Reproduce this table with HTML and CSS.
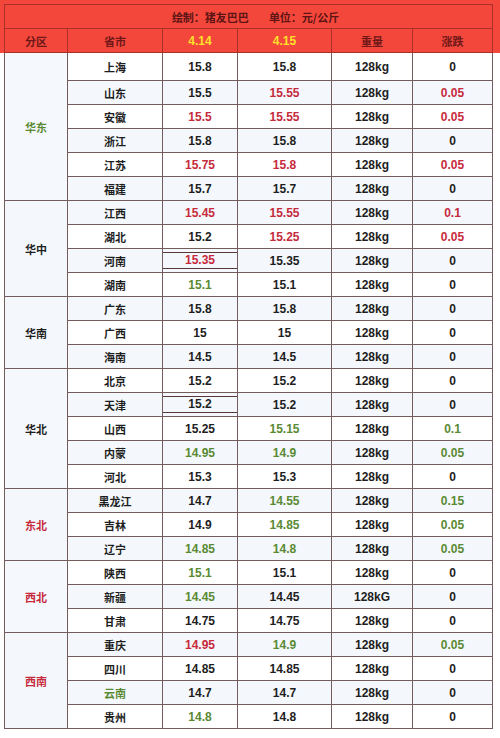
FILE: index.html
```html
<!DOCTYPE html>
<html lang="zh">
<head>
<meta charset="utf-8">
<title>猪价表</title>
<link rel="stylesheet" href="styles.css">
</head>
<body>
<div class="page">
<table class="grid">
<colgroup>
<col class="c1"><col class="c2"><col class="c3"><col class="c4"><col class="c5"><col class="c6">
</colgroup>
<thead>
<tr class="title-row"><th colspan="6"><span class="t-left">绘制：猪友巴巴</span><span class="t-right">单位：元/公斤</span></th></tr>
<tr class="head-row"><th class="cn">分区</th><th class="cn">省市</th><th class="date">4.14</th><th class="date">4.15</th><th class="cn">重量</th><th class="cn">涨跌</th></tr>
</thead>
<tbody>
<tr class="first"><td class="area green" rowspan="6">华东</td><td class="prov">上海</td><td>15.8</td><td>15.8</td><td>128kg</td><td>0</td></tr>
<tr class="alt"><td class="prov">山东</td><td>15.5</td><td class="red">15.55</td><td>128kg</td><td class="red">0.05</td></tr>
<tr><td class="prov">安徽</td><td class="red">15.5</td><td class="red">15.55</td><td>128kg</td><td class="red">0.05</td></tr>
<tr class="alt"><td class="prov">浙江</td><td>15.8</td><td>15.8</td><td>128kg</td><td>0</td></tr>
<tr><td class="prov">江苏</td><td class="red">15.75</td><td class="red">15.8</td><td>128kg</td><td class="red">0.05</td></tr>
<tr class="alt"><td class="prov">福建</td><td>15.7</td><td>15.7</td><td>128kg</td><td>0</td></tr>

<tr class="alt"><td class="area" rowspan="4">华中</td><td class="prov">江西</td><td class="red">15.45</td><td class="red">15.55</td><td>128kg</td><td class="red">0.1</td></tr>
<tr><td class="prov">湖北</td><td>15.2</td><td class="red">15.25</td><td>128kg</td><td class="red">0.05</td></tr>
<tr class="alt"><td class="prov">河南</td><td class="red"><div class="boxed">15.35</div></td><td>15.35</td><td>128kg</td><td>0</td></tr>
<tr><td class="prov">湖南</td><td class="green">15.1</td><td>15.1</td><td>128kg</td><td>0</td></tr>

<tr class="alt"><td class="area" rowspan="3">华南</td><td class="prov">广东</td><td>15.8</td><td>15.8</td><td>128kg</td><td>0</td></tr>
<tr><td class="prov">广西</td><td>15</td><td>15</td><td>128kg</td><td>0</td></tr>
<tr class="alt"><td class="prov">海南</td><td>14.5</td><td>14.5</td><td>128kg</td><td>0</td></tr>

<tr><td class="area" rowspan="5">华北</td><td class="prov">北京</td><td>15.2</td><td>15.2</td><td>128kg</td><td>0</td></tr>
<tr class="alt"><td class="prov">天津</td><td><div class="boxed">15.2</div></td><td>15.2</td><td>128kg</td><td>0</td></tr>
<tr><td class="prov">山西</td><td>15.25</td><td class="green">15.15</td><td>128kg</td><td class="green">0.1</td></tr>
<tr class="alt"><td class="prov">内蒙</td><td class="green">14.95</td><td class="green">14.9</td><td>128kg</td><td class="green">0.05</td></tr>
<tr><td class="prov">河北</td><td>15.3</td><td>15.3</td><td>128kg</td><td>0</td></tr>

<tr class="alt"><td class="area red" rowspan="3">东北</td><td class="prov">黑龙江</td><td>14.7</td><td class="green">14.55</td><td>128kg</td><td class="green">0.15</td></tr>
<tr><td class="prov">吉林</td><td>14.9</td><td class="green">14.85</td><td>128kg</td><td class="green">0.05</td></tr>
<tr class="alt"><td class="prov">辽宁</td><td class="green">14.85</td><td class="green">14.8</td><td>128kg</td><td class="green">0.05</td></tr>

<tr><td class="area red" rowspan="3">西北</td><td class="prov">陕西</td><td class="green">15.1</td><td>15.1</td><td>128kg</td><td>0</td></tr>
<tr class="alt"><td class="prov">新疆</td><td class="green">14.45</td><td>14.45</td><td>128kG</td><td>0</td></tr>
<tr><td class="prov">甘肃</td><td>14.75</td><td>14.75</td><td>128kg</td><td>0</td></tr>

<tr class="alt"><td class="area red" rowspan="4">西南</td><td class="prov">重庆</td><td class="red">14.95</td><td class="green">14.9</td><td>128kg</td><td class="green">0.05</td></tr>
<tr><td class="prov">四川</td><td>14.85</td><td>14.85</td><td>128kg</td><td>0</td></tr>
<tr class="alt"><td class="prov green">云南</td><td>14.7</td><td>14.7</td><td>128kg</td><td>0</td></tr>
<tr><td class="prov">贵州</td><td class="green">14.8</td><td>14.8</td><td>128kg</td><td>0</td></tr>
</tbody>
</table>
</div>
</body>
</html>
```

FILE: styles.css
```css
html, body {
  margin: 0;
  padding: 0;
  background: #ffffff;
}

.page {
  width: 500px;
  height: 738px;
  padding-top: 4px;
  box-sizing: border-box;
  background: linear-gradient(#f3473c 0, #f3473c 53px, #ffffff 53px);
}

.grid {
  margin-left: 4px;
  width: 488px;
  border-collapse: collapse;
  table-layout: fixed;
  font-family: "Liberation Sans", "Noto Sans CJK SC", sans-serif;
  font-weight: bold;
  font-size: 12px;
  color: #1e1e1e;
}

.c1 { width: 63px; }
.c2 { width: 95px; }
.c3 { width: 75px; }
.c4 { width: 94px; }
.c5 { width: 81px; }
.c6 { width: 80px; }

.grid th {
  height: 23px;
  padding: 0;
  border: 1px solid #a8302a;
  background: #f3473c;
  text-align: center;
  vertical-align: middle;
  line-height: 14px;
}

.title-row th {
  font-family: "Noto Sans CJK SC", sans-serif;
  font-size: 11px;
  color: #5c1414;
  padding-left: 14px;
}

.t-left { margin-right: 20px; }

.head-row .cn {
  font-family: "Noto Sans CJK SC", sans-serif;
  font-size: 11px;
  color: #6e1717;
}

.head-row .date {
  font-family: "Liberation Sans", sans-serif;
  font-size: 12px;
  color: #ffe02a;
}

.grid td {
  height: 23px;
  padding: 0;
  border: 1px solid #735c5b;
  background: #ffffff;
  text-align: center;
  vertical-align: middle;
  line-height: 14px;
}

.grid tr.alt td { background: #f4f8fc; }

.grid tr.first td { height: 27px; }

.grid td.area {
  background: #f5f8fc;
  font-family: "Noto Sans CJK SC", sans-serif;
  font-size: 11px;
}

.grid td.prov {
  font-family: "Noto Sans CJK SC", sans-serif;
  font-size: 11px;
}

.grid td.red { color: #c62a3c; }
.grid td.green { color: #5a8a33; }

.boxed {
  height: 15px;
  line-height: 15px;
  border: 1px solid #5a3838;
  margin: 0 -1px;
}
```
